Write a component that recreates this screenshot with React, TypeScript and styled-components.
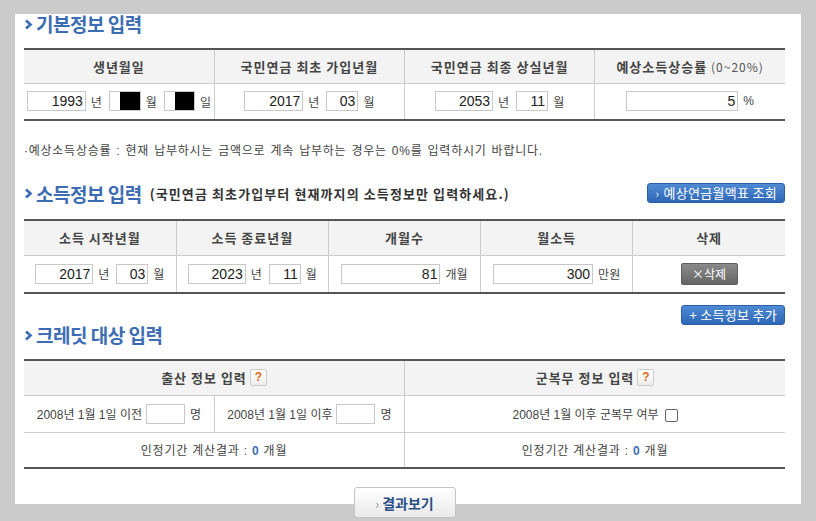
import styled, { createGlobalStyle } from 'styled-components';

const GlobalStyle = createGlobalStyle`
  html, body {
    margin: 0;
    padding: 0;
    background: #cbcbcb;
  }
  * {
    box-sizing: border-box;
  }
`;

const FONT = `"Liberation Sans", "Noto Sans CJK KR", sans-serif`;

function Chevron() {
  return (
    <ChevronIcon width="9" height="11" viewBox="0 0 9 11">
      <polyline points="2,1.5 6.5,5.5 2,9.5" fill="none" stroke="#3c6db4" strokeWidth="2.6" />
    </ChevronIcon>
  );
}

export default function App() {
  return (
    <>
      <GlobalStyle />
      <Page>
        <Panel>
          <SectionTitle>
            <Chevron />기본정보 입력
          </SectionTitle>
          <Table>
            <colgroup>
              <col style={{ width: '25%' }} />
              <col style={{ width: '25%' }} />
              <col style={{ width: '25%' }} />
              <col style={{ width: '25%' }} />
            </colgroup>
            <thead>
              <tr>
                <Th>생년월일</Th>
                <Th>국민연금 최초 가입년월</Th>
                <Th>국민연금 최종 상실년월</Th>
                <Th>
                  예상소득상승률 <Small>(0~20%)</Small>
                </Th>
              </tr>
            </thead>
            <tbody>
              <tr>
                <Td $h={37}>
                  <Field>
                    <NumInput $w={59} defaultValue="1993" />
                    <Unit>년</Unit>
                    <NumInput $w={32} $masked defaultValue="" />
                    <Unit>월</Unit>
                    <NumInput $w={31} $masked defaultValue="" />
                    <Unit>일</Unit>
                  </Field>
                </Td>
                <Td>
                  <Field>
                    <NumInput $w={59} defaultValue="2017" />
                    <Unit>년</Unit>
                    <NumInput $w={32} defaultValue="03" />
                    <Unit>월</Unit>
                  </Field>
                </Td>
                <Td>
                  <Field>
                    <NumInput $w={58} defaultValue="2053" />
                    <Unit>년</Unit>
                    <NumInput $w={32} defaultValue="11" />
                    <Unit>월</Unit>
                  </Field>
                </Td>
                <Td>
                  <Field>
                    <NumInput $w={112} defaultValue="5" />
                    <Unit>%</Unit>
                  </Field>
                </Td>
              </tr>
            </tbody>
          </Table>

          <Note>·예상소득상승률 : 현재 납부하시는 금액으로 계속 납부하는 경우는 0%를 입력하시기 바랍니다.</Note>

          <TitleRow>
            <SectionTitle $inline>
              <Chevron />소득정보 입력
              <SubTitle>(국민연금 최초가입부터 현재까지의 소득정보만 입력하세요.)</SubTitle>
            </SectionTitle>
            <BlueButton>
              <small>›</small> 예상연금월액표 조회
            </BlueButton>
          </TitleRow>
          <Table>
            <colgroup>
              <col style={{ width: '20%' }} />
              <col style={{ width: '20%' }} />
              <col style={{ width: '20%' }} />
              <col style={{ width: '20%' }} />
              <col style={{ width: '20%' }} />
            </colgroup>
            <thead>
              <tr>
                <Th $h={35}>소득 시작년월</Th>
                <Th $h={35}>소득 종료년월</Th>
                <Th $h={35}>개월수</Th>
                <Th $h={35}>월소득</Th>
                <Th $h={35}>삭제</Th>
              </tr>
            </thead>
            <tbody>
              <tr>
                <Td $h={38}>
                  <Field>
                    <NumInput $w={58} defaultValue="2017" />
                    <Unit>년</Unit>
                    <NumInput $w={32} defaultValue="03" />
                    <Unit>월</Unit>
                  </Field>
                </Td>
                <Td>
                  <Field>
                    <NumInput $w={58} defaultValue="2023" />
                    <Unit>년</Unit>
                    <NumInput $w={32} defaultValue="11" />
                    <Unit>월</Unit>
                  </Field>
                </Td>
                <Td>
                  <Field>
                    <NumInput $w={99} defaultValue="81" />
                    <Unit>개월</Unit>
                  </Field>
                </Td>
                <Td>
                  <Field>
                    <NumInput $w={100} defaultValue="300" />
                    <Unit>만원</Unit>
                  </Field>
                </Td>
                <Td>
                  <GrayButton>×삭제</GrayButton>
                </Td>
              </tr>
            </tbody>
          </Table>

          <AddRow>
            <BlueButton>+ 소득정보 추가</BlueButton>
          </AddRow>

          <SectionTitle $tight>
            <Chevron />크레딧 대상 입력
          </SectionTitle>
          <Table>
            <colgroup>
              <col style={{ width: '25%' }} />
              <col style={{ width: '25%' }} />
              <col style={{ width: '50%' }} />
            </colgroup>
            <thead>
              <tr>
                <Th colSpan={2} $h={35}>
                  <HeadWithHelp>
                    출산 정보 입력 <Help>?</Help>
                  </HeadWithHelp>
                </Th>
                <Th $h={35}>
                  <HeadWithHelp>
                    군복무 정보 입력 <Help>?</Help>
                  </HeadWithHelp>
                </Th>
              </tr>
            </thead>
            <tbody>
              <tr>
                <Td $h={37}>
                  <Field>
                    <Label>2008년 1월 1일 이전</Label>
                    <NumInput $w={39} defaultValue="" />
                    <Unit>명</Unit>
                  </Field>
                </Td>
                <Td>
                  <Field>
                    <Label>2008년 1월 1일 이후</Label>
                    <NumInput $w={39} defaultValue="" />
                    <Unit>명</Unit>
                  </Field>
                </Td>
                <Td>
                  <Field>
                    <Label>2008년 1월 이후 군복무 여부</Label>
                    <Check />
                  </Field>
                </Td>
              </tr>
              <tr>
                <Td colSpan={2} $h={36}>
                  <Result>
                    인정기간 계산결과 : <Count>0</Count> 개월
                  </Result>
                </Td>
                <Td>
                  <Result>
                    인정기간 계산결과 : <Count>0</Count> 개월
                  </Result>
                </Td>
              </tr>
            </tbody>
          </Table>

          <ResultRow>
            <ResultButton>
              <span>›</span>결과보기
            </ResultButton>
          </ResultRow>
        </Panel>
      </Page>
    </>
  );
}

const Page = styled.div`
  padding: 15px 15px 0 15px;
  width: 816px;
`;

/* the white sheet stops at 490px; the result button hangs below it */
const Panel = styled.div`
  width: 786px;
  background: linear-gradient(#fff, #fff) top left / 100% 490px no-repeat;
  padding: 0 16px 3px 9px;
  font-family: ${FONT};
  color: #444;
`;

const SectionTitle = styled.h2<{ $inline?: boolean; $tight?: boolean }>`
  margin: ${(p) => (p.$inline ? '0' : p.$tight ? '0 0 15px' : '-1px 0 15px')};
  height: 19px;
  line-height: 19px;
  font-size: 19px;
  font-weight: bold;
  color: #3c6db4;
  font-family: "Noto Sans CJK KR", sans-serif;
  letter-spacing: -0.5px;
  display: flex;
  align-items: center;
  white-space: nowrap;
`;

const ChevronIcon = styled.svg`
  margin: 1px 3px 0 0;
  flex: none;
`;

const SubTitle = styled.span`
  margin-left: 8px;
  font-size: 13px;
  color: #333;
  letter-spacing: 1.1px;
`;

const Small = styled.span`
  font-weight: normal;
  font-size: 12px;
  color: #555;
`;

const Table = styled.table`
  width: 100%;
  border-collapse: collapse;
  table-layout: fixed;
  border-top: 2px solid #555;
  border-bottom: 2px solid #555;
`;

const Th = styled.th<{ $h?: number }>`
  height: ${(p) => p.$h ?? 34}px;
  padding: 0;
  background: #f3f3f3;
  border-left: 1px solid #ccc;
  border-bottom: 1px solid #ccc;
  font-size: 13px;
  font-weight: bold;
  color: #444;
  letter-spacing: 1px;
  text-align: center;
  font-family: "Noto Sans CJK KR", sans-serif;
  &:first-child {
    border-left: none;
  }
`;

const Td = styled.td<{ $h?: number }>`
  height: ${(p) => (p.$h ? `${p.$h}px` : 'auto')};
  padding: 0;
  border-left: 1px solid #ccc;
  border-top: 1px solid #ccc;
  text-align: center;
  font-size: 12px;
  color: #444;
  &:first-child {
    border-left: none;
  }
`;

const Field = styled.div`
  display: inline-flex;
  align-items: center;
  gap: 4px;
`;

const NumInput = styled.input<{ $w: number; $masked?: boolean }>`
  width: ${(p) => p.$w}px;
  height: 20px;
  border: 1px solid #c8c8c8;
  padding: 0 2px;
  text-align: right;
  font-family: "Liberation Sans", sans-serif;
  font-size: 14px;
  color: #222;
  background: ${(p) => (p.$masked ? 'linear-gradient(to right, #fff 10px, #000 10px)' : '#fff')};
  outline: none;
`;

const Unit = styled.span`
  font-size: 12px;
  color: #444;
  margin: 0 3px 0 1px;
  &:last-child {
    margin-right: 0;
  }
`;

const Label = styled.span`
  font-size: 12px;
  color: #444;
`;

const Result = styled.span`
  font-size: 12px;
  color: #444;
  letter-spacing: 0.8px;
`;

const Note = styled.p`
  margin: 23px 0 25px;
  font-size: 12px;
  color: #444;
  height: 14px;
  line-height: 14px;
  letter-spacing: 0.75px;
  word-spacing: 1px;
`;

const TitleRow = styled.div`
  display: flex;
  justify-content: space-between;
  align-items: center;
  margin-bottom: 16px;
`;

const BlueButton = styled.button`
  height: 20px;
  padding: 0 7px 0 8px;
  border: 1px solid #2b5ea8;
  border-radius: 3px;
  background: linear-gradient(#4f8ad3, #2e67b6);
  color: #fff;
  font-family: "Noto Sans CJK KR", sans-serif;
  font-size: 13px;
  letter-spacing: 0.3px;
  line-height: 18px;
  small {
    font-size: 11px;
    margin-right: 1px;
  }
`;

const GrayButton = styled.button`
  width: 57px;
  height: 22px;
  border: 1px solid #5d5d5d;
  border-radius: 2px;
  background: linear-gradient(#8a8a8a, #666);
  color: #fff;
  font-family: "Noto Sans CJK KR", sans-serif;
  font-size: 12px;
  padding: 0;
`;

const AddRow = styled.div`
  display: flex;
  justify-content: flex-end;
  margin: 11px 0 0;
`;

const HeadWithHelp = styled.span`
  display: inline-flex;
  align-items: center;
  gap: 3px;
`;

const Help = styled.span`
  width: 17px;
  height: 17px;
  border: 1px solid #ccc;
  border-radius: 2px;
  background: linear-gradient(#fff, #eee);
  color: #e06a17;
  font-family: "Liberation Sans", sans-serif;
  font-size: 12px;
  font-weight: bold;
  line-height: 15px;
  text-align: center;
  letter-spacing: 0;
`;

const Check = styled.span`
  width: 13px;
  height: 13px;
  border: 1px solid #666;
  border-radius: 2px;
  background: #fff;
  margin: 3px 0 0 2px;
`;

const Count = styled.b`
  color: #3c6db4;
  font-family: "Liberation Sans", sans-serif;
`;

const ResultRow = styled.div`
  display: flex;
  justify-content: center;
  margin-top: 18px;
`;

const ResultButton = styled.button`
  width: 102px;
  height: 31px;
  border: 1px solid #c4c4c4;
  border-radius: 3px;
  background: linear-gradient(#fff, #e9e9e9);
  color: #2c4f86;
  font-family: "Noto Sans CJK KR", sans-serif;
  font-size: 14px;
  font-weight: bold;
  padding: 0;
  span {
    color: #999;
    font-weight: normal;
    font-size: 13px;
    margin-right: 3px;
  }
`;
